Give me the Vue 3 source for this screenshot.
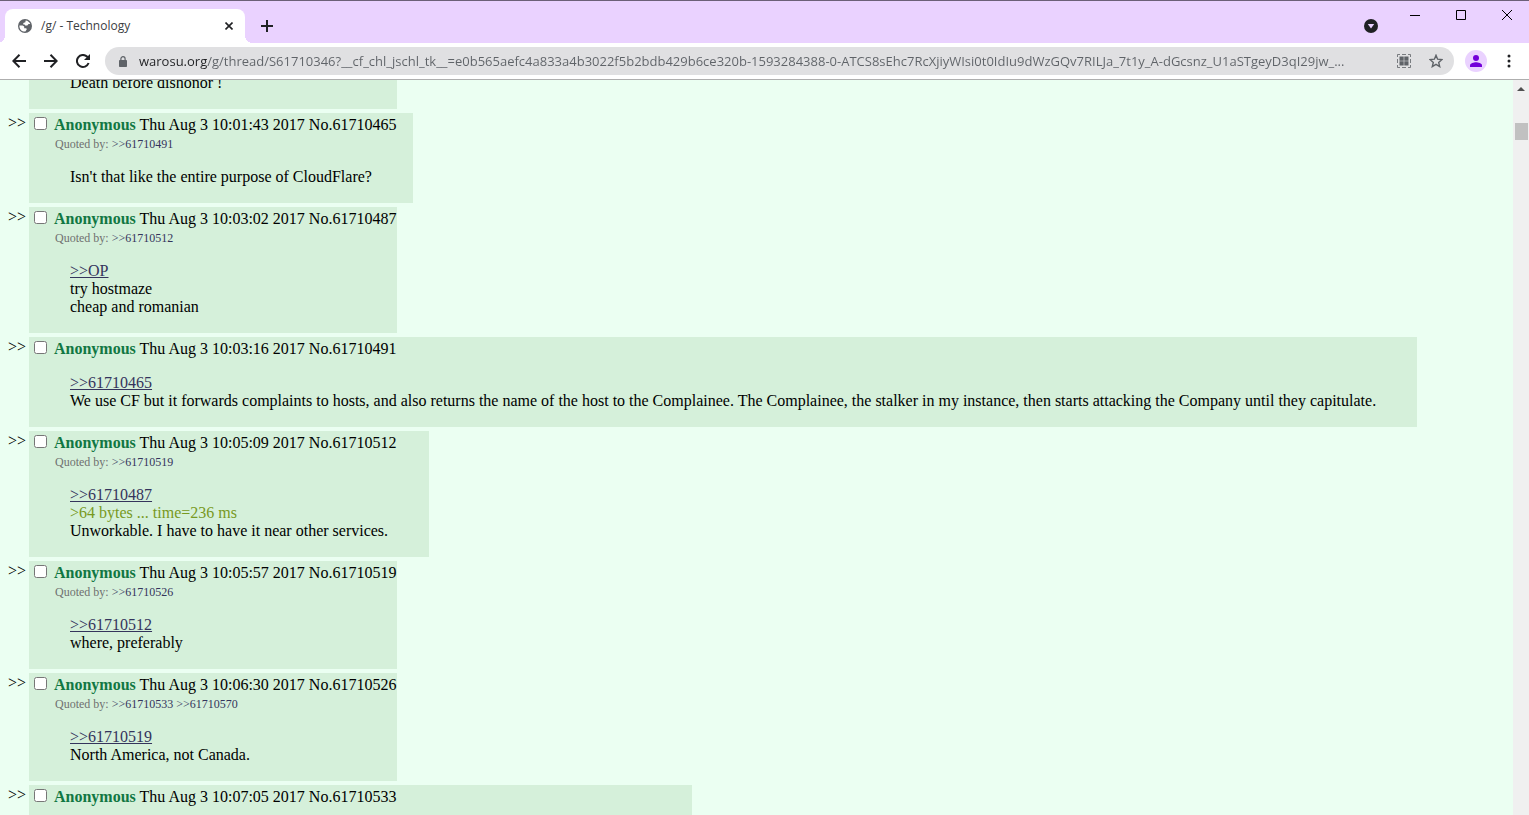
<template>
  <div class="browser">
    <header class="tabstrip">
      <div class="tab">
        <svg class="tab__icon" viewBox="0 0 14 14" width="14" height="14" aria-hidden="true">
          <circle cx="7" cy="7" r="7" fill="#5f6368" />
          <path d="M7.6 1.4C9.8 1.6 11.6 3 12.3 5H10.5L9.3 6.6H7.2L6.6 5.4H5.3V3.9L7.4 3.3Z" fill="#fff" />
          <path d="M1.4 6.4H4.6L6.2 7.6V9.2H8.2L8.8 10.2L7.4 12.5C4 12.8 1.2 10.2 1.4 6.4Z" fill="#fff" />
        </svg>
        <span class="tab__title">/g/ - Technology</span>
        <button class="tab__close" aria-label="Close tab">
          <svg viewBox="0 0 8 8" width="8" height="8"><path d="M0.5 0.5L7.5 7.5M7.5 0.5L0.5 7.5" stroke="#202124" stroke-width="1.6" /></svg>
        </button>
      </div>
      <button class="newtab" aria-label="New tab">
        <svg viewBox="0 0 12 12" width="12" height="12"><path d="M6 0V12M0 6H12" stroke="#202124" stroke-width="2" /></svg>
      </button>
      <button class="search-tabs" aria-label="Search tabs">
        <svg viewBox="0 0 14 14" width="14" height="14"><circle cx="7" cy="7" r="7" fill="#202124" /><path d="M3.8 5H10.2L7 9.4Z" fill="#ead2ff" /></svg>
      </button>
      <div class="window-buttons">
        <button aria-label="Minimize"><svg viewBox="0 0 10 10" width="10" height="10"><path d="M0 5.5H10" stroke="#000" /></svg></button>
        <button aria-label="Maximize"><svg viewBox="0 0 10 10" width="10" height="10"><path d="M0.5 0.5H9.5V9.5H0.5Z" fill="none" stroke="#000" /></svg></button>
        <button aria-label="Close"><svg viewBox="0 0 10 10" width="10" height="10"><path d="M0 0L10 10M10 0L0 10" stroke="#000" /></svg></button>
      </div>
    </header>

    <nav class="toolbar">
      <button class="nav-btn" aria-label="Back">
        <svg viewBox="0 0 14 14" width="14" height="14"><path d="M14 7H1.5M7.5 0.8L1.3 7L7.5 13.2" fill="none" stroke="#202124" stroke-width="2" /></svg>
      </button>
      <button class="nav-btn" aria-label="Forward">
        <svg viewBox="0 0 14 14" width="14" height="14"><path d="M0 7H12.5M6.5 0.8L12.7 7L6.5 13.2" fill="none" stroke="#202124" stroke-width="2" /></svg>
      </button>
      <button class="nav-btn" aria-label="Reload">
        <svg viewBox="0 0 14 14" width="14" height="14"><path d="M12.6 9A6 6 0 1 1 11.3 2.8L12.6 4.1" fill="none" stroke="#202124" stroke-width="2" /><path d="M14 0V6H8Z" fill="#202124" /></svg>
      </button>
      <div class="omnibox">
        <svg viewBox="0 0 8 11" width="8" height="11" class="omnibox__lock" aria-hidden="true">
          <rect y="4" width="8" height="7" rx="0.8" fill="#5f6368" />
          <path d="M1.9 4.5V2.8A2.1 2.1 0 0 1 6.1 2.8V4.5" fill="none" stroke="#5f6368" stroke-width="1.2" />
        </svg>
        <input v-model="url" class="omnibox__input" type="text" aria-label="Address" spellcheck="false" />
        <button class="omnibox__btn" aria-label="Create QR code">
          <svg viewBox="0 0 14 14" width="14" height="14">
            <path d="M0.5 3V0.5H3M5 0.5H9M11 0.5H13.5V3M13.5 5V9M13.5 11V13.5H11M9 13.5H5M3 13.5H0.5V11M0.5 9V5" fill="none" stroke="#5f6368" stroke-opacity="0.8" />
            <path d="M2.5 2.5H6.7V6.7H2.5ZM7.3 2.5H11.5V6.7H7.3ZM2.5 7.3H6.7V11.5H2.5ZM7.3 7.3H11.5V11.5H7.3Z" fill="#5f6368" />
          </svg>
        </button>
        <button class="omnibox__btn" aria-label="Bookmark this page">
          <svg viewBox="0 0 14 14" width="14" height="14"><path d="M7 1.3L8.6 5.2L12.9 5.6L9.7 8.4L10.7 12.6L7 10.3L3.3 12.6L4.3 8.4L1.1 5.6L5.4 5.2Z" fill="none" stroke="#5f6368" stroke-width="1.4" /></svg>
        </button>
      </div>
      <button class="avatar" aria-label="Profile">
        <svg viewBox="0 0 12 12" width="12" height="12"><circle cx="6" cy="3" r="3" fill="#7300d9" /><path d="M0 12V10.3C0 8.3 4 7.3 6 7.3S12 8.3 12 10.3V12Z" fill="#7300d9" /></svg>
      </button>
      <button class="menu" aria-label="Menu">
        <svg viewBox="0 0 4 14" width="4" height="14"><g fill="#202124"><circle cx="2" cy="2" r="1.5" /><circle cx="2" cy="7" r="1.5" /><circle cx="2" cy="12" r="1.5" /></g></svg>
      </button>
    </nav>

    <div class="viewport">
      <main class="thread">
        <div v-for="post in posts" :key="post.id" class="row">
          <span class="row__mark">{{ post.time ? '>>' : '' }}</span>
          <article class="post" :style="{ minWidth: post.width + 'px' }">
            <div v-if="post.time" class="post__head">
              <input :id="'p' + post.id" type="checkbox" class="post__check" />
              <label :for="'p' + post.id"><b class="post__name">Anonymous</b> {{ post.time }} No.{{ post.id }}</label>
            </div>
            <div v-if="post.quotedBy" class="post__quoted">
              Quoted by: <template v-for="q in post.quotedBy" :key="q"><a href="#">&gt;&gt;{{ q }}</a>{{ ' ' }}</template>
            </div>
            <blockquote class="post__body">
              <div v-for="(line, i) in post.lines" :key="i">
                <a v-if="line.startsWith('>>')" href="#">{{ line }}</a>
                <span v-else-if="line.startsWith('>')" class="post__green">{{ line }}</span>
                <template v-else>{{ line }}</template>
              </div>
            </blockquote>
          </article>
        </div>
      </main>
      <div class="scrollbar">
        <span class="scrollbar__arrow"></span>
        <span class="scrollbar__thumb"></span>
      </div>
    </div>
  </div>
</template>

<script setup>
import { ref } from 'vue'

const url = ref('warosu.org/g/thread/S61710346?__cf_chl_jschl_tk__=e0b565aefc4a833a4b3022f5b2bdb429b6ce320b-1593284388-0-ATCS8sEhc7RcXjiyWIsi0t0IdIu9dWzGQv7RILJa_7t1y_A-dGcsnz_U1aSTgeyD3qI29jw_...')

const posts = [
  { id: 0, width: 368, lines: ['Death before dishonor !'] },
  { id: 61710465, time: 'Thu Aug 3 10:01:43 2017', quotedBy: [61710491], lines: ["Isn't that like the entire purpose of CloudFlare?"] },
  { id: 61710487, time: 'Thu Aug 3 10:03:02 2017', quotedBy: [61710512], lines: ['>>OP', 'try hostmaze', 'cheap and romanian'] },
  {
    id: 61710491,
    time: 'Thu Aug 3 10:03:16 2017',
    lines: [
      '>>61710465',
      'We use CF but it forwards complaints to hosts, and also returns the name of the host to the Complainee. The Complainee, the stalker in my instance, then starts attacking the Company until they capitulate.'
    ]
  },
  { id: 61710512, time: 'Thu Aug 3 10:05:09 2017', quotedBy: [61710519], lines: ['>>61710487', '>64 bytes ... time=236 ms', 'Unworkable. I have to have it near other services.'] },
  { id: 61710519, time: 'Thu Aug 3 10:05:57 2017', quotedBy: [61710526], lines: ['>>61710512', 'where, preferably'] },
  { id: 61710526, time: 'Thu Aug 3 10:06:30 2017', quotedBy: [61710533, 61710570], lines: ['>>61710519', 'North America, not Canada.'] },
  { id: 61710533, time: 'Thu Aug 3 10:07:05 2017', width: 663, lines: [] }
]
</script>

<style>
body { margin: 0; overflow: hidden; }
</style>

<style scoped>
.browser { display: flex; flex-direction: column; height: 100vh; font-family: 'Open Sans', 'Noto Sans', sans-serif; }
button { display: flex; align-items: center; justify-content: center; padding: 0; border: 0; background: none; }
svg { display: block; flex: none; }

.tabstrip { display: flex; flex: none; box-sizing: border-box; height: 43px; padding-left: 5px; border-top: 1px solid #6c6078; background: #ead2ff; }
.tab { position: relative; display: flex; align-items: center; box-sizing: border-box; width: 240px; margin-top: 8px; padding: 0 12px 0 13px; border-radius: 8px 8px 0 0; background: #fff; }
.tab::before, .tab::after { content: ''; position: absolute; bottom: 0; width: 8px; height: 8px; }
.tab::before { left: -8px; background: radial-gradient(circle at 0 0, #ead2ff 8px, #fff 8px); }
.tab::after { right: -8px; background: radial-gradient(circle at 100% 0, #ead2ff 8px, #fff 8px); }
.tab__title { flex: 1; margin-left: 9px; font-size: 12px; line-height: 16px; color: #3c4043; }
.newtab { width: 28px; margin: 8px 0 0 8px; }
.search-tabs { width: 28px; margin: 8px 0 0 auto; }
.window-buttons { display: flex; height: 28px; margin-left: 6px; }
.window-buttons button { box-sizing: border-box; width: 46px; padding-left: 2px; }

.toolbar { display: flex; flex: none; align-items: center; box-sizing: border-box; height: 37px; padding-right: 8px; border-bottom: 1px solid #aeaeae; background: #fff; }
.nav-btn { width: 32px; height: 28px; }
.nav-btn:first-child { margin-left: 3px; }
.omnibox { display: flex; flex: 1; align-items: center; height: 28px; margin-left: 6px; padding-right: 2px; border-radius: 14px; background: #e0e0e2; }
.omnibox__lock { margin: 0 12px 0 14px; }
/* host in dark, the rest of the address in grey */
.omnibox__input {
  flex: 1; min-width: 0; height: 28px; padding: 0; border: 0; outline: 0;
  font-family: inherit; font-size: 13px; color: transparent;
  background: linear-gradient(90deg, #202124 68px, #5f6368 68px); background-clip: text; -webkit-background-clip: text;
}
.omnibox__btn { width: 32px; height: 28px; }
.avatar { width: 22px; height: 22px; margin-left: 11px; border-radius: 50%; background: #ead2ff; }
.menu { width: 24px; height: 28px; margin-left: 10px; }

.viewport { display: flex; flex: 1; min-height: 0; overflow: hidden; background: #ebfff2; }
.thread { display: flex; flex: 1; flex-direction: column; gap: 4px; min-width: 0; margin-top: -23px; padding-left: 8px; font-family: 'Liberation Serif', serif; font-size: 16px; line-height: 18px; color: #000; }
.row { display: flex; align-items: flex-start; }
.row__mark { width: 21px; padding-top: 1px; }
.post { box-sizing: border-box; padding: 1px; background: #d5f0da; }
.post__head { display: flex; align-items: flex-start; height: 20px; white-space: nowrap; }
.post__head label { padding-top: 2px; }
.post__check { width: 13px; height: 13px; margin: 3px 7px 0 4px; }
.post__name { color: #117743; }
.post__quoted { height: 17px; padding: 1px 0 0 25px; font-size: 12px; color: #707070; }
.post__quoted a { color: #34345c; text-decoration: none; }
.post__body { margin: 16px 40px; }
.post__body a { color: #34345c; }
.post__green { color: #789922; }

.scrollbar { display: flex; flex: none; flex-direction: column; align-items: center; width: 16px; background: #f0f0f0; }
.scrollbar__arrow { margin-top: 7px; border: 4px solid transparent; border-top: 0; border-bottom-color: #505050; }
.scrollbar__thumb { width: 13px; height: 17px; margin-top: 32px; background: #c1c1c1; }
</style>
